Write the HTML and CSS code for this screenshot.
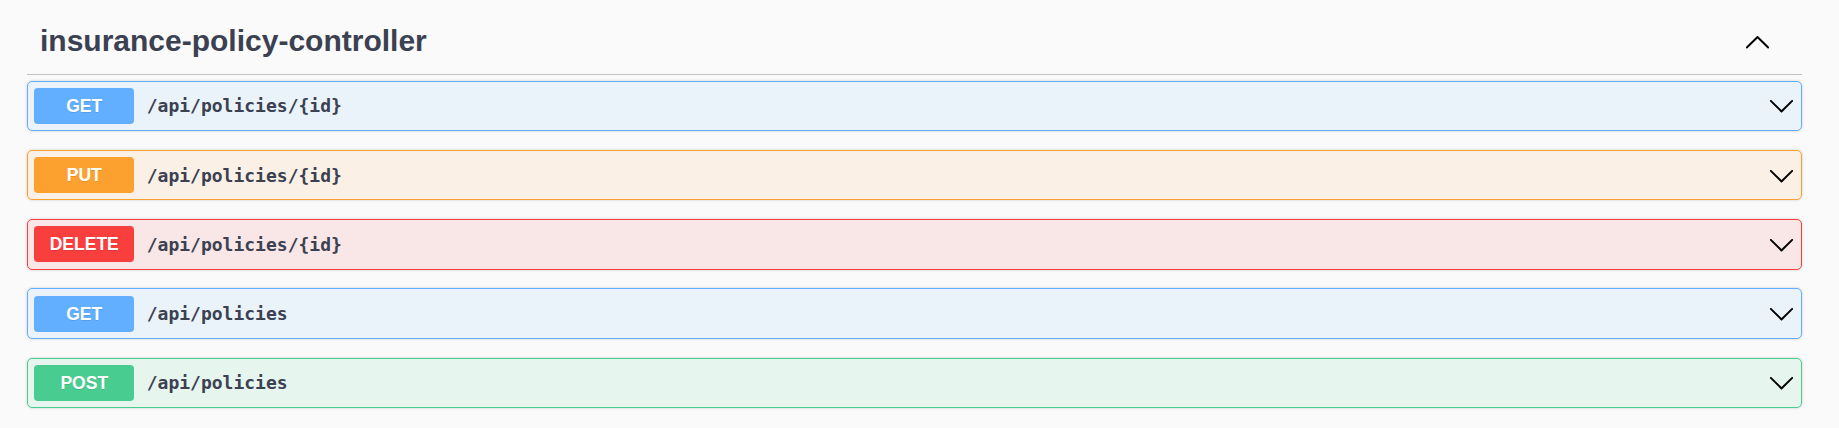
FILE: index.html
```html
<!DOCTYPE html>
<html lang="en">
<head>
<meta charset="utf-8">
<title>insurance-policy-controller</title>
<link rel="stylesheet" href="styles.css">
</head>
<body>
<div class="wrapper">
  <section class="tag-section">
    <h3 class="tag">
      <span class="tag-name">insurance-policy-controller</span>
      <button class="expand" aria-label="Collapse">
        <svg class="arrow" viewBox="0 0 20 20" width="27" height="27"><path d="M17.418 14.908c.272.268.709.268.979 0s.271-.701 0-.969l-7.908-7.83c-.27-.268-.707-.268-.979 0l-7.908 7.83c-.27.268-.27.701 0 .969.271.268.709.268.979 0L10 7.767l7.418 7.141z"/></svg>
      </button>
    </h3>
    <div class="ops">
      <div class="opblock get">
        <div class="summary">
          <span class="method">GET</span>
          <span class="path">/api/policies/{id}</span>
          <svg class="arrow" viewBox="0 0 20 20" width="27" height="27"><path d="M17.418 6.109c.272-.268.709-.268.979 0s.271.701 0 .969l-7.908 7.83c-.27.268-.707.268-.979 0l-7.908-7.83c-.27-.268-.27-.701 0-.969.271-.268.709-.268.979 0L10 13.25l7.418-7.141z"/></svg>
        </div>
      </div>
      <div class="opblock put">
        <div class="summary">
          <span class="method">PUT</span>
          <span class="path">/api/policies/{id}</span>
          <svg class="arrow" viewBox="0 0 20 20" width="27" height="27"><path d="M17.418 6.109c.272-.268.709-.268.979 0s.271.701 0 .969l-7.908 7.83c-.27.268-.707.268-.979 0l-7.908-7.83c-.27-.268-.27-.701 0-.969.271-.268.709-.268.979 0L10 13.25l7.418-7.141z"/></svg>
        </div>
      </div>
      <div class="opblock delete">
        <div class="summary">
          <span class="method">DELETE</span>
          <span class="path">/api/policies/{id}</span>
          <svg class="arrow" viewBox="0 0 20 20" width="27" height="27"><path d="M17.418 6.109c.272-.268.709-.268.979 0s.271.701 0 .969l-7.908 7.83c-.27.268-.707.268-.979 0l-7.908-7.83c-.27-.268-.27-.701 0-.969.271-.268.709-.268.979 0L10 13.25l7.418-7.141z"/></svg>
        </div>
      </div>
      <div class="opblock get">
        <div class="summary">
          <span class="method">GET</span>
          <span class="path">/api/policies</span>
          <svg class="arrow" viewBox="0 0 20 20" width="27" height="27"><path d="M17.418 6.109c.272-.268.709-.268.979 0s.271.701 0 .969l-7.908 7.83c-.27.268-.707.268-.979 0l-7.908-7.830c-.27-.268-.27-.701 0-.969.271-.268.709-.268.979 0L10 13.25l7.418-7.141z"/></svg>
        </div>
      </div>
      <div class="opblock post">
        <div class="summary">
          <span class="method">POST</span>
          <span class="path">/api/policies</span>
          <svg class="arrow" viewBox="0 0 20 20" width="27" height="27"><path d="M17.418 6.109c.272-.268.709-.268.979 0s.271.701 0 .969l-7.908 7.83c-.27.268-.707.268-.979 0l-7.908-7.83c-.27-.268-.27-.701 0-.969.271-.268.709-.268.979 0L10 13.25l7.418-7.141z"/></svg>
        </div>
      </div>
    </div>
  </section>
</div>
</body>
</html>
```
FILE: styles.css
```css
html, body {
  margin: 0;
  padding: 0;
  background: #fafafa;
}

.wrapper {
  padding: 12px 37px 0 27px;
}

.tag {
  display: flex;
  align-items: center;
  margin: 0 0 6px;
  padding: 12px 31px 15.5px 13px;
  border-bottom: 1px solid rgba(59, 65, 81, 0.3);
  font-family: "Liberation Sans", Arial, sans-serif;
  font-size: 30px;
  font-weight: 700;
  color: #3b4151;
}

.tag-name {
  flex: 1;
}

.expand {
  display: flex;
  align-items: center;
  border: none;
  background: none;
  padding: 0;
  margin: 0;
  cursor: pointer;
}

.arrow {
  display: block;
  fill: #000;
  flex: none;
}

.opblock {
  margin: 0 0 18.75px;
  border: 1px solid;
  border-radius: 5px;
  box-shadow: 0 0 3px rgba(0, 0, 0, 0.19);
}

.summary {
  display: flex;
  align-items: center;
  padding: 6.25px 6px 6.25px 6.25px;
}

.method {
  min-width: 100px;
  height: 36px;
  line-height: 36px;
  text-align: center;
  border-radius: 3.75px;
  font-family: "Liberation Sans", Arial, sans-serif;
  font-size: 17.5px;
  font-weight: 700;
  color: #fff;
  text-shadow: 0 1px 0 rgba(0, 0, 0, 0.1);
}

.path {
  flex: 1;
  padding: 0 12.5px;
  font-family: "DejaVu Sans Mono", "Liberation Mono", monospace;
  font-size: 18px;
  font-weight: 700;
  color: #3b4151;
}

.get {
  background: rgba(97, 175, 254, 0.1);
  border-color: #61affe;
}
.get .method { background: #61affe; }

.put {
  background: rgba(252, 161, 48, 0.1);
  border-color: #fca130;
}
.put .method { background: #fca130; }

.delete {
  background: rgba(249, 62, 62, 0.1);
  border-color: #f93e3e;
}
.delete .method { background: #f93e3e; }

.post {
  background: rgba(73, 204, 144, 0.1);
  border-color: #49cc90;
}
.post .method { background: #49cc90; }
```
